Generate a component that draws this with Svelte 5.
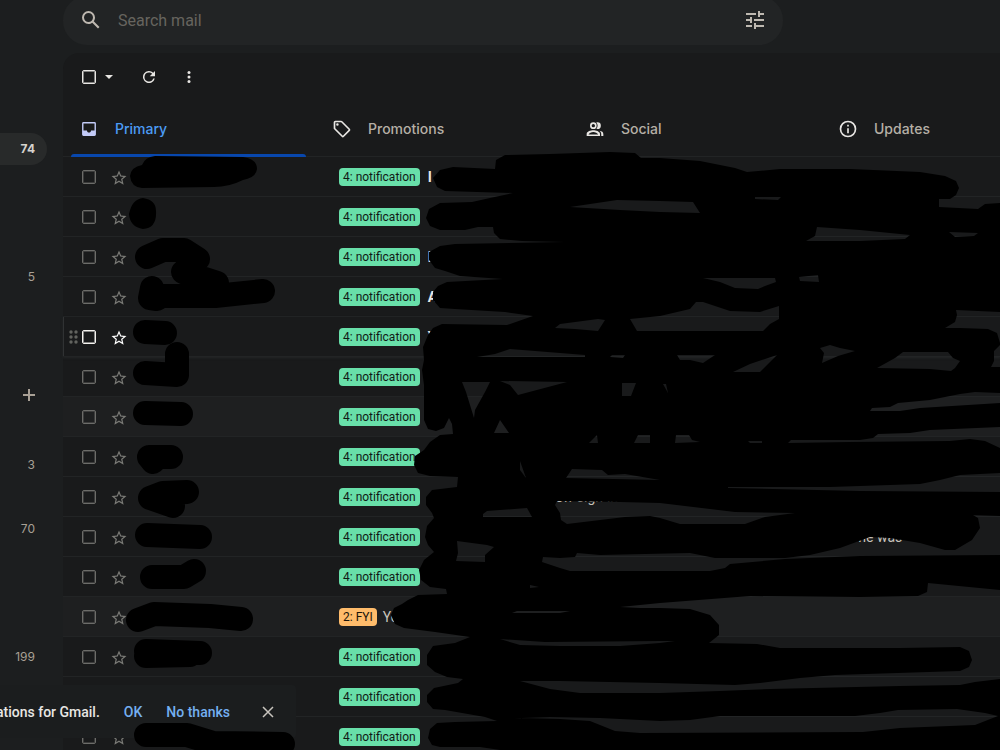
<script>
  const star =
    'M22 9.24l-7.19-.62L12 2 9.19 8.63 2 9.24l5.46 4.73L5.82 21 12 17.27 18.18 21l-1.63-7.03L22 9.24zM12 15.4l-3.76 2.27 1-4.28-3.32-2.88 4.38-.38L12 6.1l1.71 4.04 4.38.38-3.32 2.88 1 4.28L12 15.4z';

  const tabs = [
    { name: 'Primary', icon: 'M20 2H4a2 2 0 0 0-2 2v16a2 2 0 0 0 2 2h16a2 2 0 0 0 2-2V4a2 2 0 0 0-2-2zm0 12h-5c0 1.660-1.350 3-3 3s-3-1.340-3-3H4V4h16v10z' },
    { name: 'Promotions', icon: 'M21.41 11.58l-9-9A2 2 0 0 0 11 2H4a2 2 0 0 0-2 2v7c0 .55.22 1.05.59 1.42l9 9a2 2 0 0 0 2.82 0l7-7a2 2 0 0 0 0-2.84zM13 20.01L4 11V4h7l9 9-7 7.01zM6.5 5a1.5 1.5 0 1 0 0 3 1.5 1.5 0 0 0 0-3z' },
    { name: 'Social', icon: 'M10 12a4 4 0 1 0 0-8 4 4 0 0 0 0 8zm0-6a2 2 0 1 1 0 4 2 2 0 0 1 0-4zm0 7.5c-3 0-8 1.3-8 4.5v2.5h16V18c0-3.2-5-4.5-8-4.5zM4.2 18.500c.8-1.700 3.600-3 5.800-3s5 1.300 5.800 3H4.200zM15 12a4 4 0 0 0 0-8c-.5 0-1 .1-1.400.2a6 6 0 0 1 0 7.600c.4.1.9.2 1.400.2zm2.500 2c1.200 1 2 2.300 2 4v2.500H22V18c0-2.300-1.800-3.500-4.500-4z' },
    { name: 'Updates', icon: 'M11 7h2v2h-2V7zm0 4h2v6h-2v-6zm1-9a10 10 0 1 0 0 20 10 10 0 0 0 0-20zm0 18a8 8 0 1 1 0-16 8 8 0 0 1 0 16z' }
  ];

  const mailboxCounts = ['74', '', '', '', '5'];
  const labelCounts = ['3', '', '70', '', '', '', '199'];

  const rows = [
    { subject: 'I' },
    {},
    { subject: 'D' },
    { subject: 'A' },
    { subject: 'Y', hover: true },
    {},
    { read: true },
    {},
    { snippet: 'new sign-in', indent: 122 },
    { snippet: 'time was', indent: 420 },
    {},
    { tag: '2: FYI', read: true, snippet: 'Yo', indent: 0 },
    {},
    {},
    {}
  ];

  const region =
    'M433 178L440 170L453 167L495 169L496 160L505 155L550 154L610 152L635 153L641 158L660 158L700 161L735 168L747 172L780 169L850 169L920 172L945 176L956 181L959 188L956 195L950 199L939 199V207L978 209L985 204L1000 203V750H500L480 747H440L432 745L428 738L430 729L437 723L455 722L497 721L485 717L445 710L433 709L427 702V695L434 688L458 683L463 679L447 677L435 672L427 665V655L433 646L455 643L470 637L435 632L404 628L395 624L391 615L394 608L402 604L408 600L418 595L447 594L446 589L430 587L421 580L419 570L424 560L434 552L428 545L425 537L427 526L434 518L432 513L426 505V497L432 490L457 487L458 477L430 476L418 473L414 465L415 456L424 450L430 442L440 435L453 434L452 424L449 418L444 428L436 431L428 429L424 420V385L422 370L424 360L423 347L428 335L433 328L442 324L507 325L533 316L505 312L455 309L440 308L433 300V292L438 286L447 282L503 279L460 276L445 271L435 268L429 260V252L440 246L455 244L565 242L522 241L500 239L494 233L493 227H478L465 230H440L430 226L426 218L429 209L440 203L472 202L490 198L513 193L445 191L437 187Z';

  const gaps = [
    '570 207 617 200 660 201 693 202 700 213 660 212 620 210',
    '755 197 781 197 778 200 755 199',
    '817 227 860 230 910 235 905 239 860 241 806 241 815 236',
    '949 232 978 233 974 236 955 237',
    '703 278 775 278 776 282 765 286 758 289 735 288 720 282',
    '799 277 818 275 819 282 800 281',
    '630 319 660 316 690 309 696 302 703 302 730 311 760 312 779 306 779 319 770 324 763 331 637 331',
    '555 328 560 324 598 319 605 320 598 331 575 329',
    '902 328 945 328 955 322 957 315 956 310 1000 312 1000 343 997 333 988 329 960 328',
    '477 357 495 354 510 349 585 355 585 357',
    '610 357 612 355 625 355 623 358',
    '677 355 715 355 703 363 690 360 680 360',
    '733 372 750 364 777 355 760 372',
    '822 363 824 353 820 348 830 345 840 348 855 351 838 356',
    '877 368 895 358 903 352 948 352 953 358 960 361 955 368 951 371 930 369',
    '994 351 1000 345 1000 367 991 367 994 361',
    '462 382 490 382 485 392 475 410 474 418 470 405 466 392',
    '500 381 567 382 518 395 510 385',
    '622 383 636 383 631 396 622 396',
    '663 384 666 384 668 393',
    '500 420 509 433 494 433',
    '597 435 598 443 589 443',
    '638 435 650 435 650 443 634 443',
    '676 435 689 435 692 440 700 442 675 443',
    '748 441 762 441 762 443 750 443',
    '870 411 872 408 890 407 898 403 930 400 960 394 975 392 1000 393 1000 403 920 408 900 411',
    '788 443 791 440 860 440 873 438 878 434 910 433 930 430 1000 427 1000 448 985 441 970 439 950 441 850 442',
    '566 478 572 469 602 470 608 475 625 474 660 480',
    '520 470 520 461 526 478',
    '728 487 830 487 920 484 940 480 960 475 1000 473 1000 492 860 491 728 488',
    '555 505 557 501 620 502 660 503 735 512 795 513 765 517 745 524 680 524 660 518 650 516 625 517 567 524 561 520 560 513',
    '483 514 487 511 500 510 527 508 532 517 483 517',
    '457 541 487 545 494 547 485 555 485 562 456 561 458 553',
    '542 562 543 557 560 558 575 557 577 553 600 555 690 553 715 558 785 558 810 555 840 548 870 537 890 538 920 543 945 550 955 550 972 540 980 528 978 518 973 515 1000 516 1000 555 860 556 785 559 730 564 725 568 710 571 570 571 560 568',
    '530 585 539 587 530 588',
    '512 613 517 611 570 611 560 613',
    '620 607 660 603 750 596 860 597 918 596 927 592 928 583 1000 590 1000 679 975 682 960 685 900 686 770 689 720 691 660 693 580 693 550 689 520 681 560 681 660 683 735 685 760 683 800 678 835 675 960 671 969 667 972 660 969 651 960 647 900 648 780 648 757 644 709 643 719 635 719 625 710 615 690 609 660 608 640 608',
    '500 639 545 642 660 641 675 641 660 643 620 646 560 646 520 645',
    '497 719 550 717 600 718 660 721 690 720 720 716 855 716 880 713 898 710 957 709 985 713 998 716 975 725 900 728 863 732 640 733 615 731 590 721 560 719 520 718'
  ];

  const ink = region + gaps.map((points) => 'M' + points + 'Z').join('');
</script>

<div class="page">
  <nav class="side" aria-label="Mailboxes">
    <ul>
      {#each mailboxCounts as count, i}
        <li class:current={i === 0}>{count}</li>
      {/each}
    </ul>
    <button class="add" aria-label="Create new label">
      <svg viewBox="0 0 12 12" width="12" height="12"><path d="M5 0h2v5h5v2H7v5H5V7H0V5h5z" /></svg>
    </button>
    <ul>
      {#each labelCounts as count}
        <li>{count}</li>
      {/each}
    </ul>
  </nav>

  <main>
    <form class="search" role="search">
      <button type="button" aria-label="Search">
        <svg viewBox="0 0 24 24" width="24" height="24"><path d="M20.490 19l-5.730-5.730C15.530 12.200 16 10.910 16 9.500A6.500 6.500 0 1 0 9.500 16c1.410 0 2.700-.47 3.770-1.240L19 20.490 20.490 19zM5 9.500a4.500 4.500 0 1 1 9 0 4.500 4.500 0 0 1-9 0z" /></svg>
      </button>
      <input type="text" placeholder="Search mail" aria-label="Search mail" />
      <button type="button" aria-label="Show search options">
        <svg viewBox="0 0 24 24" width="24" height="24"><path d="M3 17v2h6v-2H3zM3 5v2h10V5H3zm10 16v-2h8v-2h-8v-2h-2v6h2zM7 9v2H3v2h4v2h2V9H7zm14 4v-2H11v2h10zm-6-4h2V7h4V5h-4V3h-2v6z" /></svg>
      </button>
    </form>

    <section class="panel">
      <div class="toolbar">
        <input type="checkbox" aria-label="Select all" />
        <button class="caret" aria-label="Select options"><svg viewBox="0 0 8 4" width="8" height="4"><path d="M0 0h8L4 4z" /></svg></button>
        <button class="refresh" aria-label="Refresh"><svg viewBox="0 0 24 24" width="18" height="18"><path d="M17.650 6.350A8 8 0 1 0 19.730 14h-2.080A6 6 0 1 1 12 6c1.660 0 3.140.69 4.220 1.780L13 11h7V4l-2.350 2.350z" /></svg></button>
        <button class="more" aria-label="More"><svg viewBox="0 0 24 24" width="18" height="18"><circle cx="12" cy="6" r="2" /><circle cx="12" cy="12" r="2" /><circle cx="12" cy="18" r="2" /></svg></button>
      </div>

      <div class="tabs" role="tablist">
        {#each tabs as tab, i}
          <button role="tab" aria-selected={i === 0} class:active={i === 0}>
            <svg viewBox={i === 0 ? '-1 -1 26 26' : '0 0 24 24'} width="20" height="20"><path d={tab.icon} transform={i === 0 ? 'translate(1.2 1.2) scale(.9)' : undefined} /></svg>
            <span>{tab.name}</span>
          </button>
        {/each}
      </div>

      <ul class="mail">
        {#each rows as row}
          <li class:read={row.read} class:hover={row.hover}>
            <span class="grip">
              {#if row.hover}
                <svg viewBox="0 0 9 14" width="9" height="14">
                  {#each [2, 7, 12] as y}<circle cx="2" cy={y} r="1.700" /><circle cx="7" cy={y} r="1.700" />{/each}
                </svg>
              {/if}
            </span>
            <input type="checkbox" aria-label="Select" />
            <button class="star" aria-label="Star"><svg viewBox="0 0 24 24" width="18" height="18"><path d={star} /></svg></button>
            <span class="sender"></span>
            <span class="tag" class:fyi={row.tag}>{row.tag ?? '4: notification'}</span>
            {#if row.subject}<b>{row.subject}</b>{/if}
            {#if row.snippet}<span class="snippet" style:margin-left="{row.indent}px">{row.snippet}</span>{/if}
          </li>
        {/each}
      </ul>
    </section>
  </main>

  <div class="toast" role="status">
    <span>ations for Gmail.</span>
    <button>OK</button>
    <button>No thanks</button>
    <button class="close" aria-label="Close"><svg viewBox="0 0 12 12" width="12" height="12"><path d="M1 1l10 10M11 1L1 11" /></svg></button>
  </div>

  <svg class="ink" viewBox="0 0 1000 750" width="1000" height="750" aria-hidden="true">
    <path fill-rule="evenodd" d={ink} />
    <path d="M142 165Q145 157 155 156L243 157Q257 159 257 169Q256 178 243 180Q229 187 214 187L142 188Q131 187 130 176Q131 167 142 165ZM143 198Q156 200 156 211Q157 228 143 229Q130 227 129 214Q132 199 143 198Z" />
    <g class="strokes">
      <path d="M147 257L163 250H184L198 259L183 272L217 283" />
      <path d="M152 288L150 298L157 299M151 296L215 296L263 291" />
      <path d="M145 332L165 333M145 373L177 375V354" />
      <path d="M145 413L181 414M149 457H171M149 457L153 462" />
      <path d="M150 498L163 493L187 492M150 498L173 506L170 495" />
      <path d="M147 535L200 537M152 577H184L194 571" />
      <path d="M138 620L154 614L210 616L241 619" />
      <path d="M146 651L200 653M146 656L190 655" />
      <path d="M146 735H187L213 743L283 744" />
    </g>
  </svg>
</div>

<style>
  :global(body) {
    background: #1c1e1f;
  }
  .page {
    position: relative;
    display: flex;
    height: 100vh;
    overflow: hidden;
    font-family: Inter, Roboto, sans-serif;
    background: #1c1e1f;
    color: #e8e6e3;
  }
  ul {
    list-style: none;
    margin: 0;
    padding: 0;
  }
  button {
    display: flex;
    align-items: center;
    justify-content: center;
    padding: 0;
    border: 0;
    background: none;
    color: inherit;
    font: inherit;
  }
  svg {
    display: block;
    fill: currentColor;
    flex: none;
  }
  .side {
    flex: 0 0 63px;
    padding-top: 133px;
    box-sizing: border-box;
    font-size: 12px;
    color: #a8a095;
  }
  .side li {
    height: 32px;
    line-height: 32px;
    margin-right: 16px;
    padding-right: 12px;
    text-align: right;
  }
  .side .current {
    background: #282a2a;
    border-radius: 0 16px 16px 0;
    font-weight: 700;
    color: #d6d3ce;
  }
  .add {
    width: 32px;
    height: 32px;
    margin: 86px 0 38px 13px;
  }
  main {
    flex: 1;
    min-width: 0;
    display: flex;
    flex-direction: column;
  }
  .search {
    display: flex;
    align-items: center;
    flex: none;
    width: 100%;
    max-width: 720px;
    height: 49px;
    margin: -4px 0 8px;
    padding: 0 16px 1px;
    box-sizing: border-box;
    border-radius: 24px;
    background: #222425;
    color: #beb8b0;
  }
  .search input {
    flex: 1;
    min-width: 0;
    margin-left: 15px;
    padding: 0;
    border: 0;
    outline: 0;
    background: none;
    color: inherit;
    font: 16px Roboto, sans-serif;
  }
  .search input::placeholder {
    color: #67645f;
    opacity: 1;
  }
  .panel {
    flex: none;
    border-radius: 16px 0 0 0;
    background: #191a1b;
  }
  input[type='checkbox'] {
    appearance: none;
    flex: none;
    width: 14px;
    height: 14px;
    margin: 0;
    border: 1px solid #e8e6e3;
    border-radius: 2px;
    box-shadow: inset 0 0 0 1px rgba(232, 230, 227, 0.5);
  }
  .toolbar {
    display: flex;
    align-items: center;
    height: 48px;
    padding-left: 19px;
  }
  .caret {
    margin-left: 9px;
  }
  .refresh {
    margin-left: 27px;
  }
  .more {
    margin-left: 22px;
  }
  .tabs {
    display: flex;
    height: 56px;
    box-sizing: border-box;
    border-bottom: 1px solid #222425;
  }
  .tabs button {
    position: relative;
    flex: 0 0 253px;
    justify-content: flex-start;
    gap: 16px;
    padding-left: 16px;
    font-size: 14px;
    font-weight: 500;
    color: #b5afa6;
  }
  .tabs svg {
    color: #e8e6e3;
  }
  .tabs .active {
    color: #4c9cf5;
  }
  .tabs .active svg {
    color: #c3cbf8;
  }
  .tabs .active::after {
    content: '';
    position: absolute;
    left: 8px;
    right: 10px;
    bottom: -1px;
    height: 3px;
    border-radius: 3px 3px 0 0;
    background: #0847ad;
  }
  .mail li {
    display: flex;
    align-items: center;
    height: 40px;
    box-sizing: border-box;
    border-bottom: 1px solid #222425;
    font-family: Roboto, sans-serif;
    font-size: 14px;
    white-space: nowrap;
    overflow: hidden;
  }
  .mail .read {
    background: #1e1f20;
  }
  .mail input {
    border-color: #6c6c69;
    box-shadow: inset 0 0 0 1px rgba(108, 108, 105, 0.4);
  }
  .mail .hover {
    box-shadow: inset 1px 0 #303233, 0 1px 2px #242627;
  }
  .mail .hover input {
    border-color: #f4f2ef;
    box-shadow: inset 0 0 0 1px rgba(244, 242, 239, 0.5);
  }
  .mail b {
    margin-left: 2px;
  }
  .grip {
    flex: 0 0 12px;
    padding-left: 6px;
    margin-right: 1px;
    color: #62635f;
  }
  .star {
    margin-left: 14px;
    padding-top: 2px;
    color: #7a7a76;
  }
  .hover .star {
    color: #fff;
  }
  .sender {
    flex: 0 0 211px;
  }
  .tag {
    flex: none;
    height: 18px;
    line-height: 18px;
    padding: 0 4px;
    margin-right: 6px;
    border-radius: 4px;
    background: #68dfa9;
    color: #111a16;
    font-size: 12px;
  }
  .tag.fyi {
    background: #ffbc6b;
    color: #1c140a;
  }
  .snippet {
    color: #c8c3bb;
  }
  .toast {
    position: absolute;
    left: 0;
    bottom: 12px;
    display: flex;
    align-items: center;
    gap: 24px;
    height: 53px;
    padding-right: 22px;
    border-radius: 0 4px 4px 0;
    background: #1b1d1e;
    font-family: Roboto, sans-serif;
    font-size: 14px;
    font-weight: 500;
  }
  .toast span {
    margin-left: -4px;
  }
  .toast button {
    color: #74aff0;
  }
  .toast .close {
    margin-left: 8px;
    color: #c8c4be;
  }
  .close svg {
    fill: none;
    stroke: currentColor;
    stroke-width: 1.5;
  }
  .ink {
    position: absolute;
    top: 0;
    left: 0;
    fill: #000;
    pointer-events: none;
  }
  .strokes {
    fill: none;
    stroke: #000;
    stroke-width: 24;
    stroke-linecap: round;
    stroke-linejoin: round;
  }
</style>
